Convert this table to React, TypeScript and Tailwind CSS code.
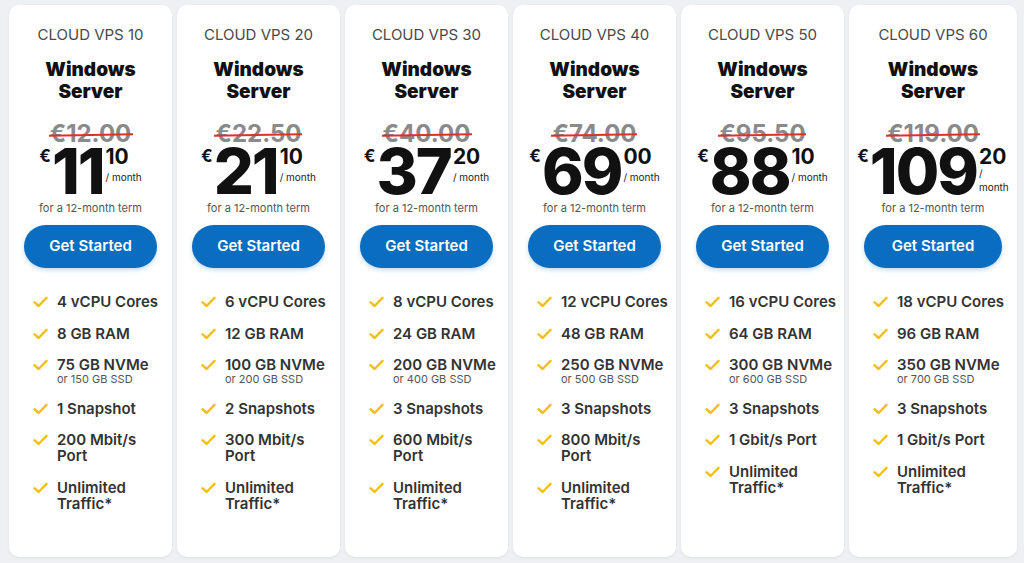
import React from "react";

type Plan = {
  name: string;
  old: string;
  euros: string;
  cents: string;
  features: { main: string; sub?: string }[];
  wide?: boolean;
};

const plans: Plan[] = [
  { name: "CLOUD VPS 10", old: "€12.00", euros: "11", cents: "10", features: [
    { main: "4 vCPU Cores" }, { main: "8 GB RAM" }, { main: "75 GB NVMe", sub: "or 150 GB SSD" },
    { main: "1 Snapshot" }, { main: "200 Mbit/s Port" }, { main: "Unlimited Traffic*" } ] },
  { name: "CLOUD VPS 20", old: "€22.50", euros: "21", cents: "10", features: [
    { main: "6 vCPU Cores" }, { main: "12 GB RAM" }, { main: "100 GB NVMe", sub: "or 200 GB SSD" },
    { main: "2 Snapshots" }, { main: "300 Mbit/s Port" }, { main: "Unlimited Traffic*" } ] },
  { name: "CLOUD VPS 30", old: "€40.00", euros: "37", cents: "20", features: [
    { main: "8 vCPU Cores" }, { main: "24 GB RAM" }, { main: "200 GB NVMe", sub: "or 400 GB SSD" },
    { main: "3 Snapshots" }, { main: "600 Mbit/s Port" }, { main: "Unlimited Traffic*" } ] },
  { name: "CLOUD VPS 40", old: "€74.00", euros: "69", cents: "00", features: [
    { main: "12 vCPU Cores" }, { main: "48 GB RAM" }, { main: "250 GB NVMe", sub: "or 500 GB SSD" },
    { main: "3 Snapshots" }, { main: "800 Mbit/s Port" }, { main: "Unlimited Traffic*" } ] },
  { name: "CLOUD VPS 50", old: "€95.50", euros: "88", cents: "10", features: [
    { main: "16 vCPU Cores" }, { main: "64 GB RAM" }, { main: "300 GB NVMe", sub: "or 600 GB SSD" },
    { main: "3 Snapshots" }, { main: "1 Gbit/s Port" }, { main: "Unlimited Traffic*" } ] },
  { name: "CLOUD VPS 60", old: "€119.00", euros: "109", cents: "20", wide: true, features: [
    { main: "18 vCPU Cores" }, { main: "96 GB RAM" }, { main: "350 GB NVMe", sub: "or 700 GB SSD" },
    { main: "3 Snapshots" }, { main: "1 Gbit/s Port" }, { main: "Unlimited Traffic*" } ] },
];

function Check() {
  return (
    <svg width="15" height="12" viewBox="0 0 15 12" className="shrink-0 mt-[2px]">
      <path d="M1.5 6.2 L5.6 10 L13.5 1.8" fill="none" stroke="#f2bf1d" strokeWidth="2.4" strokeLinecap="round" strokeLinejoin="round" />
    </svg>
  );
}

function Card({ p }: { p: Plan }) {
  return (
    <div className="bg-white rounded-[10px] shadow-[0_1px_3px_rgba(0,0,0,0.07)] flex flex-col pt-[20px] h-[552px]">
      <div className="text-center text-[15px] leading-[20px] text-[#4a4a4a]">{p.name}</div>
      <div className="mt-[14px] text-center text-[19px] leading-[22px] font-black text-[#111]">
        Windows<br />Server
      </div>
      <div className="mt-[20px] flex justify-center">
        <span className="relative text-[24px] leading-[22px] font-bold text-[#8a8a8a]">
          {p.old}
          <span className="absolute left-[-1px] right-[-1px] top-[11px] h-[2px] bg-[#d9322c] rotate-[-1deg]" />
        </span>
      </div>
      <div className="flex justify-center items-start h-[56px] mt-[-2px]">
        <span className="text-[17px] leading-[18px] font-bold text-[#111] mt-[4px] mr-[1px]">€</span>
        <span className="text-[63px] leading-[56px] font-extrabold tracking-[-2px] text-[#111]">{p.euros}</span>
        <div className="flex flex-col ml-[2px]">
          <span className="text-[21px] leading-[22px] font-bold text-[#111] mt-[3px]">{p.cents}</span>
          {p.wide ? (
            <span className="text-[10px] leading-[14px] text-[#222] mt-[-2px]">/<br />month</span>
          ) : (
            <span className="text-[10px] leading-[12px] text-[#222] mt-[3px] whitespace-nowrap">/ month</span>
          )}
        </div>
      </div>
      <div className="mt-[2px] text-center text-[11px] leading-[14px] text-[#555]">for a 12-month term</div>
      <button className="mx-[15px] mt-[10px] h-[43px] rounded-full bg-[#0b6dc0] text-white text-[15px] font-semibold shadow-[0_2px_4px_rgba(11,109,192,0.25)]">
        Get Started
      </button>
      <div className="mt-[26px] pl-[24px] pr-[8px] flex flex-col gap-[15.5px]">
        {p.features.map((f, i) => (
          <div key={i} className="flex gap-[9px]">
            <Check />
            <div className="flex flex-col">
              <span className="text-[15px] leading-[16px] font-semibold text-[#333] max-w-[110px]">{f.main}</span>
              {f.sub && <span className="text-[11px] leading-[12px] text-[#555]">{f.sub}</span>}
            </div>
          </div>
        ))}
      </div>
    </div>
  );
}

export default function App() {
  return (
    <div className="w-[1024px] h-[563px] bg-[#eef0f3] pt-[5px] pl-[9px] pr-[7px] overflow-hidden" style={{ fontFamily: "Inter, 'Noto Sans', sans-serif" }}>
      <div className="grid grid-cols-[163px_163px_163px_163px_163px_168px] gap-[5px]">
        {plans.map((p) => (
          <Card key={p.name} p={p} />
        ))}
      </div>
    </div>
  );
}
